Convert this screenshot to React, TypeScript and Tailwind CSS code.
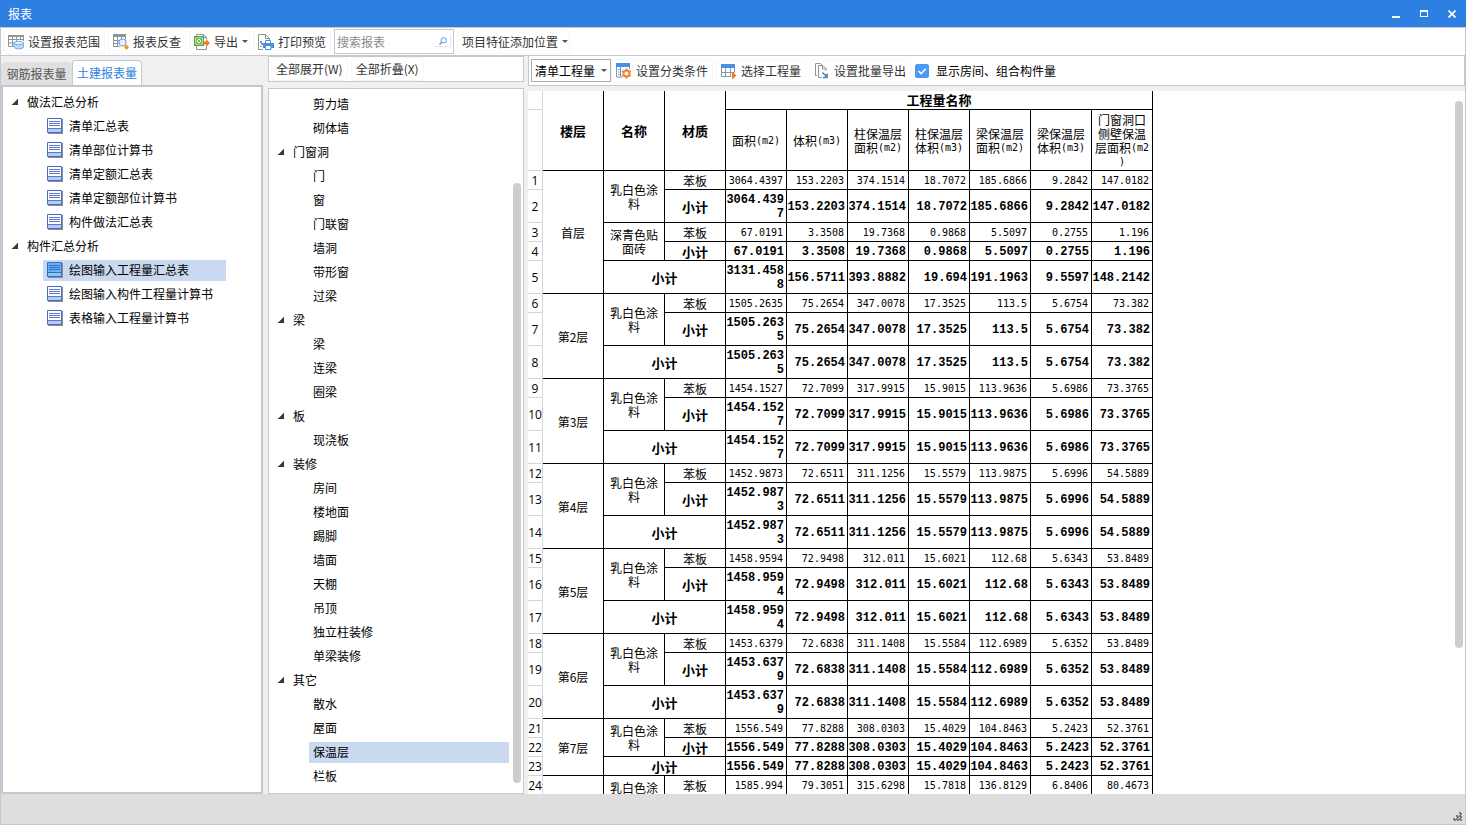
import React from "react";

const uiFont = "font-['Noto_Sans_CJK_SC','Open_Sans',sans-serif]";
const monoFont = "font-['DejaVu_Sans_Mono','Noto_Sans_CJK_SC',monospace]";
const monoBoldFont = "font-['Liberation_Mono','Noto_Sans_CJK_SC',monospace]";

/* ---------- icons ---------- */

const svgProps = { width: 16, height: 16, viewBox: "0 0 16 16", fill: "none", "aria-hidden": true } as const;

function RangeIcon() {
  return (
    <svg {...svgProps} className="shrink-0">
      <path d="M0.5 1.5h15v11h-15z" fill="#fff" />
      <path d="M0 1h16v2H0z" fill="#8d9499" />
      <path d="M0.5 1v11.500h5M0.500 5.500h15M0.500 9h6M4.500 1v11.500M8.500 1v6M12.500 1v5M15.500 1v6" stroke="#8d9499" />
      <path d="M6 9v4c0 2.500 9.500 2.500 9.500 0V9z" fill="#b9dafa" stroke="#5a9be0" strokeWidth="0.8" />
      <ellipse cx="10.750" cy="9" rx="4.750" ry="1.700" fill="#e4f1fe" stroke="#5a9be0" strokeWidth="0.800" />
    </svg>
  );
}

function ReverseIcon() {
  return (
    <svg {...svgProps} className="shrink-0">
      <path d="M0 0h13v3H0z" fill="#8d9499" />
      <path d="M0.500 1v11.500h6M0.500 6.500h6M0.500 9.500h5M4.500 1v11.500M8.500 1v4M12.500 1v4" stroke="#8d9499" />
      <circle cx="9.500" cy="8.500" r="3.500" fill="#e9f2fe" stroke="#7f9fd8" strokeWidth="1.200" />
      <path d="M13.500 10.500l2.500 2.800-2.500 2.700-2.500-2.700z" fill="#f59a1d" />
    </svg>
  );
}

function ExportIcon() {
  return (
    <svg {...svgProps} className="shrink-0">
      <path d="M2.500 2V0.500h7l3 3V5M9.500 0.500v3h3M2.500 12v3.500h10V12" stroke="#8d9499" />
      <path d="M0.700 2.700h8.600v8.600H0.700z" fill="#fff" stroke="#55a63a" strokeWidth="1.400" />
      <path d="M3 5l4 4M7 5l-4 4M2.500 4.500h5v5h-5z" stroke="#55a63a" strokeWidth="0.800" />
      <path d="M10 7.500h2V5l4 4-4 4v-2.500h-2z" fill="#f47a24" />
    </svg>
  );
}

function PrintIcon() {
  return (
    <svg {...svgProps} className="shrink-0">
      <path d="M5 15.500H0.500v-15h7l4 4V6M7.500 0.500v4h4" stroke="#8d9499" />
      <path d="M2 7h2v2H2zM3 9h2v2H3zM2 12h2v1H2z" fill="#8d9499" />
      <path d="M7.500 6.500h5v3h-5z" fill="#fff" stroke="#4a8fdf" />
      <path d="M5 9h11v5H5z" fill="#4a90e2" />
      <path d="M7.500 11.500h5.500v4H7.500z" fill="#fff" stroke="#4a8fdf" />
    </svg>
  );
}

function ClassifyIcon() {
  return (
    <svg {...svgProps} className="shrink-0">
      <path d="M0.500 1.500h13v12.500h-13z" fill="#fff" stroke="#8d9499" />
      <path d="M0 0h14v4H0z" fill="#4a90e2" />
      <path d="M4.500 4v10M2 6.500h1.500M2 9h1.500M2 11.500h1.500" stroke="#4a90e2" />
      <circle cx="10.500" cy="10.500" r="5.500" fill="#fff" />
      <circle cx="10.500" cy="10.500" r="3" stroke="#f08332" strokeWidth="2" />
      <path d="M10.500 5.500v2M10.500 13.500v2M6.200 8l1.700 1M13.100 12l1.700 1M6.200 13l1.700-1M13.100 9l1.700-1" stroke="#f08332" strokeWidth="2" />
    </svg>
  );
}

function SelectIcon() {
  return (
    <svg {...svgProps} className="shrink-0">
      <path d="M0.500 1.500h14v12h-14z" fill="#fff" />
      <path d="M0 1h14v4H0z" fill="#4a90e2" />
      <path d="M0.500 5v8.500H10M4.500 5v8.500M9.500 5v8.500M13.500 5v4M0.500 9.500h13" stroke="#8499ad" />
      <path d="M11 8.500l4.500 4-4.500 4z" fill="#f47a24" />
    </svg>
  );
}

function BatchIcon() {
  return (
    <svg {...svgProps} className="shrink-0">
      <path d="M3 12.500H1.500v-12h5l2 2" stroke="#8d9499" />
      <path d="M8 14.500H4.500v-12h4.500l3 3V8M8.500 2.500v3.500h3.500" fill="#fff" stroke="#8d9499" />
      <path d="M8.500 9.500l4 4M13 10.500v4H9" stroke="#4a82b8" strokeWidth="1.600" />
    </svg>
  );
}

function ReportIcon({ selected }: { selected?: boolean }) {
  return (
    <svg {...svgProps} className="shrink-0">
      <path d="M1 1h15v15H1z" fill="#8e8e8e" />
      <path d="M0.500 0.500h14v14h-14z" fill={selected ? "#6cb2f2" : "#fff"} stroke={selected ? "#2f6fc4" : "#4a6cc4"} />
      <path d="M1 10h13v4H1z" fill={selected ? "#8ec4f6" : "#b7cbfa"} />
      <path d="M1 10.500h13M2 3.500h11M2 5.500h11M2 7.500h11" stroke={selected ? "#2f6fc4" : "#5878cc"} />
    </svg>
  );
}

function Caret() {
  return (
    <svg width="6" height="3" viewBox="0 0 6 3" aria-hidden="true" className="shrink-0">
      <path d="M0 0h6L3 3z" fill="#555" />
    </svg>
  );
}

function Expander() {
  return (
    <svg width="6" height="6" viewBox="0 0 6 6" aria-hidden="true" className="shrink-0">
      <path d="M6 0v6H0z" fill="#3c3c3c" stroke="#222" strokeWidth="0.500" />
    </svg>
  );
}

/* ---------- toolbar button ---------- */

function ToolButton({ icon, label, caret }: { icon?: React.ReactNode; label: string; caret?: boolean }) {
  return (
    <button
      type="button"
      className={`flex h-6 shrink-0 items-center gap-1 rounded-sm border border-[#f7f7f7] pl-1 whitespace-nowrap text-[#333] ${
        caret ? "pr-px" : "pr-1"
      }`}
    >
      {icon}
      <span>{label}</span>
      {caret && <Caret />}
    </button>
  );
}

/* ---------- data ---------- */

const reportGroups = [
  { name: "做法汇总分析", items: ["清单汇总表", "清单部位计算书", "清单定额汇总表", "清单定额部位计算书", "构件做法汇总表"] },
  { name: "构件汇总分析", items: ["绘图输入工程量汇总表", "绘图输入构件工程量计算书", "表格输入工程量计算书"] },
];

const componentGroups = [
  { name: "", items: ["剪力墙", "砌体墙"] },
  { name: "门窗洞", items: ["门", "窗", "门联窗", "墙洞", "带形窗", "过梁"] },
  { name: "梁", items: ["梁", "连梁", "圈梁"] },
  { name: "板", items: ["现浇板"] },
  { name: "装修", items: ["房间", "楼地面", "踢脚", "墙面", "天棚", "吊顶", "独立柱装修", "单梁装修"] },
  { name: "其它", items: ["散水", "屋面", "保温层", "栏板"] },
];

const quantityHeads: string[][] = [
  ["面积(m2)"],
  ["体积(m3)"],
  ["柱保温层", "面积(m2)"],
  ["柱保温层", "体积(m3)"],
  ["梁保温层", "面积(m2)"],
  ["梁保温层", "体积(m3)"],
  ["门窗洞口", "侧壁保温", "层面积(m2", ")"],
];

type Material = { name: string; values: string[]; subtotal: string[] };
type Floor = { name: string; materials: Material[]; total: string[] };

function plainFloor(name: string, line: string): Floor {
  const values = line.split(" ");
  return { name, materials: [{ name: "乳白色涂料", values, subtotal: values }], total: values };
}

const floors: Floor[] = [
  {
    name: "首层",
    materials: [
      {
        name: "乳白色涂料",
        values: "3064.4397 153.2203 374.1514 18.7072 185.6866 9.2842 147.0182".split(" "),
        subtotal: "3064.4397 153.2203 374.1514 18.7072 185.6866 9.2842 147.0182".split(" "),
      },
      {
        name: "深青色贴面砖",
        values: "67.0191 3.3508 19.7368 0.9868 5.5097 0.2755 1.196".split(" "),
        subtotal: "67.0191 3.3508 19.7368 0.9868 5.5097 0.2755 1.196".split(" "),
      },
    ],
    total: "3131.4588 156.5711 393.8882 19.694 191.1963 9.5597 148.2142".split(" "),
  },
  plainFloor("第2层", "1505.2635 75.2654 347.0078 17.3525 113.5 5.6754 73.382"),
  plainFloor("第3层", "1454.1527 72.7099 317.9915 15.9015 113.9636 5.6986 73.3765"),
  plainFloor("第4层", "1452.9873 72.6511 311.1256 15.5579 113.9875 5.6996 54.5889"),
  plainFloor("第5层", "1458.9594 72.9498 312.011 15.6021 112.68 5.6343 53.8489"),
  plainFloor("第6层", "1453.6379 72.6838 311.1408 15.5584 112.6989 5.6352 53.8489"),
  plainFloor("第7层", "1556.549 77.8288 308.0303 15.4029 104.8463 5.2423 52.3761"),
  plainFloor("第8层", "1585.994 79.3051 315.6298 15.7818 136.8129 6.8406 80.4673"),
];

/* ---------- trees ---------- */

function ReportTree() {
  return (
    <ul className="py-[3px]">
      {reportGroups.map((group) => (
        <li key={group.name}>
          <button type="button" className="flex h-6 items-center gap-[9px] pl-[9px]">
            <Expander />
            {group.name}
          </button>
          <ul>
            {group.items.map((item) => {
              const selected = item === "绘图输入工程量汇总表";
              return (
                <li key={item} className="flex h-6 items-center pl-10">
                  <button
                    type="button"
                    className={`flex h-[21px] items-center gap-1.5 pl-1 text-left ${selected ? "w-[183px] bg-[#c9d9f0]" : ""}`}
                  >
                    <ReportIcon selected={selected} />
                    {item}
                  </button>
                </li>
              );
            })}
          </ul>
        </li>
      ))}
    </ul>
  );
}

function ComponentTree() {
  return (
    <ul className="min-w-0 flex-1 py-[3px]">
      {componentGroups.map((group) => (
        <li key={group.name}>
          {group.name && (
            <button type="button" className="flex h-6 items-center gap-[9px] pl-[9px]">
              <Expander />
              {group.name}
            </button>
          )}
          <ul>
            {group.items.map((item) => (
              <li key={item} className="flex h-6 items-center pl-10">
                <button
                  type="button"
                  className={`h-[21px] pl-1 text-left ${item === "保温层" ? "w-full bg-[#c9d9f0]" : ""}`}
                >
                  {item}
                </button>
              </li>
            ))}
          </ul>
        </li>
      ))}
    </ul>
  );
}

/* ---------- table ---------- */

const line = "border-r border-b border-black";

function Values({ values, bold }: { values: string[]; bold?: boolean }) {
  return (
    <>
      {values.map((value, i) => (
        <td
          key={i}
          className={`${line} pt-0.5 text-right break-all ${
            bold ? `${monoBoldFont} pr-0.5 text-[12px] font-bold` : `${monoFont} pr-[3px] text-[10px]`
          }`}
        >
          {value}
        </td>
      ))}
    </>
  );
}

function RowNumber({ n }: { n?: number }) {
  return (
    <th scope="row" className="border-r border-b border-[#d6d6d6] pt-0.5 font-['Open_Sans',sans-serif] text-[12px] font-normal whitespace-nowrap">
      {n}
    </th>
  );
}

function HeadLine({ text }: { text: string }) {
  const [, cjk, latin] = text.match(/^([^()]*)(.*)$/) ?? ["", text, ""];
  return (
    <span className="flex h-3.5 items-center justify-center whitespace-nowrap">
      {cjk}
      {latin && <span className={`${monoFont} text-[10px]`}>{latin}</span>}
    </span>
  );
}

function QuantityTable() {
  let n = 0;
  const rows: React.ReactNode[] = [];
  floors.forEach((floor) => {
    const floorSpan = floor.materials.length * 2 + 1;
    floor.materials.forEach((material, m) => {
      rows.push(
        <tr key={`${floor.name}-${m}-v`} className="h-[19px]">
          <RowNumber n={++n} />
          {m === 0 && (
            <td rowSpan={floorSpan} className={`${line} pt-0.5 text-center`}>
              {floor.name}
            </td>
          )}
          <td rowSpan={2} className={`${line} px-1 text-center`}>
            {material.name}
          </td>
          <td className={`${line} pt-0.5 text-center`}>苯板</td>
          <Values values={material.values} />
        </tr>,
        <tr key={`${floor.name}-${m}-s`} className={material.subtotal[0].length < 9 ? "h-[19px]" : "h-[33px]"}>
          <RowNumber n={++n} />
          <td className={`${line} pt-0.5 text-center text-[13px] font-bold`}>小计</td>
          <Values values={material.subtotal} bold />
        </tr>,
      );
    });
    rows.push(
      <tr key={`${floor.name}-t`} className={floor.total[0].length < 9 ? "h-[19px]" : "h-[33px]"}>
        <RowNumber n={++n} />
        <td colSpan={2} className={`${line} pt-0.5 text-center text-[13px] font-bold`}>
          小计
        </td>
        <Values values={floor.total} bold />
      </tr>,
    );
  });

  return (
    <table className="w-[625px] table-fixed border-separate border-spacing-0 text-[12px] leading-[14px] text-black">
      <colgroup>
        <col className="w-[15px]" />
        {Array.from({ length: 10 }, (_, i) => (
          <col key={i} className="w-[61px]" />
        ))}
      </colgroup>
      <thead>
        <tr className="h-[19px]">
          <RowNumber />
          {["楼层", "名称", "材质"].map((name) => (
            <th key={name} rowSpan={2} className={`${line} text-[13px] font-bold`}>
              {name}
            </th>
          ))}
          <th colSpan={7} className={`${line} text-[13px] font-bold`}>
            工程量名称
          </th>
        </tr>
        <tr className="h-[61px]">
          <RowNumber />
          {quantityHeads.map((head, i) => (
            <th key={i} className={`${line} pt-0.5 font-normal`}>
              {head.map((text) => (
                <HeadLine key={text} text={text} />
              ))}
            </th>
          ))}
        </tr>
      </thead>
      <tbody>{rows}</tbody>
    </table>
  );
}

/* ---------- page ---------- */

export default function App() {
  return (
    <div className={`flex h-screen flex-col overflow-hidden bg-[#f0f0f0] text-[12px] leading-[18px] text-black ${uiFont}`}>
      <header className="flex h-[27px] shrink-0 items-center justify-between bg-[#2d7fe1] pl-2 text-white">
        <h1>报表</h1>
        <div className="flex">
          <button type="button" aria-label="最小化" className="flex h-[27px] w-7 items-center justify-center">
            <svg width="8" height="8" viewBox="0 0 8 8">
              <path d="M0 6h8v2H0z" fill="#fff" />
            </svg>
          </button>
          <button type="button" aria-label="最大化" className="flex h-[27px] w-7 items-center justify-center">
            <svg width="8" height="7" viewBox="0 0 8 7">
              <path d="M0 0h8v7H0zM1 2v4h6V2z" fill="#fff" fillRule="evenodd" />
            </svg>
          </button>
          <button type="button" aria-label="关闭" className="flex h-[27px] w-7 items-center justify-center">
            <svg width="8" height="8" viewBox="0 0 8 8">
              <path d="M0.500 0.500l7 7M7.500 0.500l-7 7" stroke="#fff" strokeWidth="1.600" />
            </svg>
          </button>
        </div>
      </header>

      <div className="flex min-h-0 flex-1 flex-col border-x border-b border-[#c0c8d8]">
        <nav className="flex h-[29px] shrink-0 items-center gap-[3px] border-y border-[#c5c9ce] bg-white pl-0.5">
          <ToolButton icon={<RangeIcon />} label="设置报表范围" />
          <ToolButton icon={<ReverseIcon />} label="报表反查" />
          <ToolButton icon={<ExportIcon />} label="导出" caret />
          <ToolButton icon={<PrintIcon />} label="打印预览" />
          <label className="flex h-[25px] w-[120px] shrink-0 items-center border border-[#c5c9ce] bg-white px-0.5">
            <input type="text" aria-label="搜索报表" placeholder="搜索报表" className="min-w-0 flex-1 outline-none placeholder:text-[#8a8a8a]" />
            <span className="flex h-[11px] w-4 items-center justify-center border-r border-b border-[#e6e6e6]">
              <svg width="8" height="8" viewBox="0 0 8 8" aria-hidden="true">
                <circle cx="4.700" cy="3.300" r="2.600" fill="none" stroke="#4a9ae8" />
                <path d="M2.800 5.200L0.500 7.500" stroke="#4a9ae8" strokeWidth="1.300" />
              </svg>
            </span>
          </label>
          <ToolButton label="项目特征添加位置" caret />
        </nav>

        <div className="flex min-h-0 flex-1">
          <aside className="flex w-[262px] shrink-0 flex-col">
            <div role="tablist" className="flex h-[29px] shrink-0 items-end">
              <button type="button" role="tab" aria-selected="false" className="h-[23px] w-[71px] rounded-t-sm bg-[#e0e0e0] text-[#555]">
                钢筋报表量
              </button>
              <button type="button" role="tab" aria-selected="true" className="h-[25px] w-[70px] rounded-t-sm border border-b-0 border-[#c5c9ce] bg-white text-[#2d7fe1]">
                土建报表量
              </button>
            </div>
            <div className="min-h-0 flex-1 overflow-hidden border-2 border-[#c3c8cd] bg-white">
              <ReportTree />
            </div>
          </aside>

          <section className="ml-[5px] flex w-[256px] shrink-0 flex-col">
            <div className="flex h-[26px] shrink-0 items-center gap-[3px] border border-[#c5c9ce] bg-white pl-0.5">
              <ToolButton label="全部展开(W)" />
              <ToolButton label="全部折叠(X)" />
            </div>
            <div className="mt-1.5 flex min-h-0 flex-1 overflow-hidden border border-[#c5c9ce] bg-white">
              <ComponentTree />
              <div className="flex w-3.5 shrink-0 flex-col pt-[94px] pr-0.5 pb-2.5 pl-1">
                <div className="flex-1 rounded-full bg-[#cdcdcd]" />
              </div>
            </div>
          </section>

          <main className="ml-1 flex min-w-0 flex-1 flex-col">
            <div className="flex h-[30px] shrink-0 items-center border border-t-0 border-[#c5c9ce] bg-white pl-0.5">
              <div className="relative flex h-[23px] w-20 shrink-0 items-center">
                <select aria-label="工程量类型" className="h-full w-full appearance-none border border-[#adadad] bg-white pl-[3px] outline-none">
                  <option>清单工程量</option>
                </select>
                <span className="pointer-events-none absolute right-1">
                  <Caret />
                </span>
              </div>
              <div className="flex gap-[3px]">
                <ToolButton icon={<ClassifyIcon />} label="设置分类条件" />
                <ToolButton icon={<SelectIcon />} label="选择工程量" />
                <ToolButton icon={<BatchIcon />} label="设置批量导出" />
              </div>
              <label className="ml-1 flex items-center gap-[7px] whitespace-nowrap">
                <span className="relative flex">
                  <input type="checkbox" defaultChecked className="peer size-3.5 appearance-none rounded-xs border border-[#4a9af5] checked:bg-[#4a9af5]" />
                  <svg viewBox="0 0 14 14" aria-hidden="true" className="pointer-events-none absolute inset-0 hidden size-3.5 peer-checked:block">
                    <path d="M3.500 7l2.700 2.700 4.500-5" fill="none" stroke="#fff" strokeWidth="1.600" />
                  </svg>
                </span>
                显示房间、组合构件量
              </label>
            </div>
            <div className="mt-[5px] flex min-h-0 flex-1 justify-between overflow-hidden bg-white">
              <QuantityTable />
              <div className="w-2.5 shrink-0 pt-2.5 pr-0.5">
                <div className="h-[79%] rounded-full bg-[#cdcdcd]" />
              </div>
            </div>
          </main>
        </div>

        <footer className="flex h-[30px] shrink-0 items-end justify-end bg-[#dededf] p-0.5">
          <svg width="10" height="10" viewBox="0 0 10 10" aria-hidden="true" shapeRendering="crispEdges">
            <path d="M6 0h2v2H6zM7 1h2v2H7zM3 3h2v2H3zM4 4h2v2H4zM6 3h2v2H6zM7 4h2v2H7zM0 6h2v2H0zM1 7h2v2H1zM3 6h2v2H3zM4 7h2v2H4zM6 6h2v2H6zM7 7h2v2H7z" fill="#737a82" />
          </svg>
        </footer>
      </div>
    </div>
  );
}
